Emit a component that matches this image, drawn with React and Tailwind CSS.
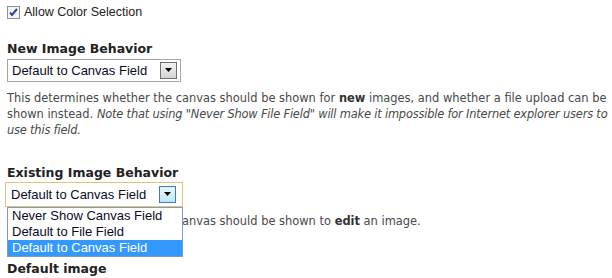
const Arrow = () => (
  <svg width="7" height="4" viewBox="0 0 7 4">
    <path d="M0 0h7L3.5 4z" fill="#000" />
  </svg>
);

const SelectBox = ({ value, focused }) => (
  <div
    className={
      focused
        ? "flex h-[25px] w-[178px] items-center justify-between border border-[#e3c27a] bg-white pl-[5px] pr-[6px]"
        : "flex h-[23px] w-[174px] items-center justify-between border border-[#a5a5a5] bg-white pl-[4px] pr-[3px]"
    }
  >
    <span className="font-['Liberation_Sans',sans-serif] text-[13px] text-[#0a0a28]">{value}</span>
    <div
      className={
        focused
          ? "flex h-[17px] w-[17px] items-center justify-center border border-[#3c7fb1] bg-gradient-to-b from-[#eaf6fd] to-[#bee6fd]"
          : "flex h-[17px] w-[17px] items-center justify-center border border-[#707070] bg-gradient-to-b from-[#f2f2f2] to-[#d4d4d4]"
      }
    >
      <Arrow />
    </div>
  </div>
);

export default function App() {
  const options = ["Never Show Canvas Field", "Default to File Field", "Default to Canvas Field"];
  return (
    <div className="h-[278px] w-[612px] overflow-hidden bg-white pl-[7px] pr-[2px] pt-[3px] font-['DejaVu_Sans',sans-serif] text-[11.45px] text-[#494949]">
      <label className="flex items-center gap-[4px] font-['Liberation_Sans',sans-serif] text-[12.5px] text-[#222]">
        <span className="flex h-[13px] w-[13px] items-center justify-center border border-[#8f8f8f] bg-[#f4f4f4]">
          <svg width="9" height="9" viewBox="0 0 9 9">
            <path d="M1 4.5l2 2.5 5-6" stroke="#2a3ea0" strokeWidth="2" fill="none" />
          </svg>
        </span>
        Allow Color Selection
      </label>

      <h3 className="mt-[19px] text-[12.5px] leading-[16px] font-bold text-[#222]">New Image Behavior</h3>
      <div className="mt-[2px]">
        <SelectBox value="Default to Canvas Field" />
      </div>
      <p className="mt-[8px] leading-[16px]">
        This determines whether the canvas should be shown for <b className="text-[#333]">new</b> images, and whether a file upload can be shown instead.{" "}
        <i className="tracking-[-0.2px]">Note that using "Never Show File Field" will make it impossible for Internet explorer users to use this field.</i>
      </p>

      <h3 className="mt-[27px] text-[12.5px] leading-[16px] font-bold text-[#222]">Existing Image Behavior</h3>
      <div className="relative -ml-[2px] mt-[1px]">
        <SelectBox value="Default to Canvas Field" focused />
        <ul className="absolute left-[2px] top-[25px] z-10 w-[176px] border border-[#7f9db9] bg-white font-['Liberation_Sans',sans-serif] text-[13px] text-[#0a0a28]">
          {options.map((o, i) => (
            <li
              key={o}
              className={i === 2 ? "h-[16px] bg-[#3399ff] pl-[4px] leading-[16px] text-white" : "h-[16px] pl-[4px] leading-[16px]"}
            >
              {o}
            </li>
          ))}
        </ul>
      </div>
      <p className="mt-[6px] leading-[16px]">
        This determines whether the canvas should be shown to <b className="text-[#333]">edit</b> an image.
      </p>

      <h3 className="mt-[32px] text-[12.5px] leading-[16px] font-bold text-[#222]">Default image</h3>
    </div>
  );
}
